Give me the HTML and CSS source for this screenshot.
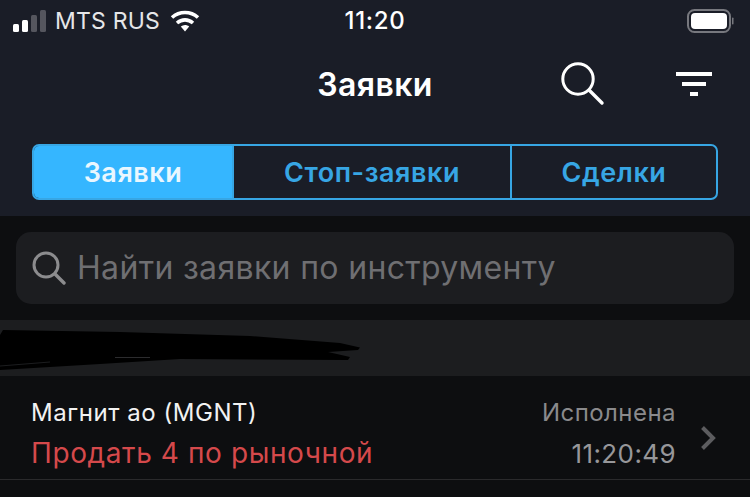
FILE: index.html
```html
<!DOCTYPE html>
<html lang="ru">
<head>
<meta charset="utf-8">
<title>Заявки</title>
<link rel="stylesheet" href="styles.css">
</head>
<body>
<div class="app">
  <header class="top">
    <div class="status">
      <div class="status-left">
        <svg class="signal" width="34" height="22" viewBox="0 0 34 22"><rect x="0" y="14" width="6" height="8" rx="1.5" fill="#fff"/><rect x="9" y="10" width="6" height="12" rx="1.5" fill="#fff"/><rect x="18" y="5" width="6" height="17" rx="1.5" fill="#55565e"/><rect x="27" y="0" width="6" height="22" rx="1.5" fill="#55565e"/></svg>
        <span class="carrier">MTS RUS</span>
        <svg class="wifi" width="30" height="22" viewBox="0 0 30 22"><path d="M2 7.500C9.500.8 20.500.8 28 7.500" fill="none" stroke="#fff" stroke-width="3.600"/><path d="M7 13c4.800-4.200 11.200-4.200 16 0" fill="none" stroke="#fff" stroke-width="3.600"/><path d="M10.800 16.500c2.600-2 5.800-2 8.400 0L15 21.500z" fill="#fff"/></svg>
      </div>
      <div class="clock">11:20</div>
      <div class="status-right">
        <svg width="48" height="24" viewBox="0 0 48 24"><rect x="1" y="1" width="42" height="22" rx="6.500" fill="none" stroke="#77787e" stroke-width="2"/><rect x="4" y="4" width="36" height="16" rx="4" fill="#fff"/><rect x="45" y="8.500" width="1.500" height="7" rx=".7" fill="#77787e"/></svg>
      </div>
    </div>
    <nav class="nav">
      <h1 class="title">Заявки</h1>
      <div class="nav-icons">
        <svg class="ic-search" width="44" height="44" viewBox="0 0 44 44"><circle cx="17" cy="17" r="15.200" fill="none" stroke="#fff" stroke-width="3"/><path d="M28.500 28.500L41 41" fill="none" stroke="#fff" stroke-width="3.400" stroke-linecap="round"/></svg>
        <svg class="ic-filter" width="36" height="24" viewBox="0 0 36 24"><rect x="0" y="0" width="36" height="4" fill="#fff"/><rect x="6" y="10" width="24" height="4" fill="#fff"/><rect x="14" y="20" width="8" height="4" fill="#fff"/></svg>
      </div>
    </nav>
    <div class="seg-wrap">
      <div class="seg">
        <div class="seg-item seg-active">Заявки</div>
        <div class="seg-item seg-stop">Стоп-заявки</div>
        <div class="seg-item seg-deals">Сделки</div>
      </div>
    </div>
  </header>
  <main class="body">
    <div class="search-wrap">
      <div class="search">
        <svg width="34" height="34" viewBox="0 0 34 34"><circle cx="14" cy="14" r="12" fill="none" stroke="#8c8c8e" stroke-width="3"/><path d="M23 23L32 32" stroke="#8c8c8e" stroke-width="3.400" stroke-linecap="round"/></svg>
        <span class="search-text">Найти заявки по инструменту</span>
      </div>
    </div>
    <div class="band">
      <svg class="scribble" width="362" height="56" viewBox="0 0 362 56"><path d="M3 10L120 12L250 16L340 23L360 27.500L358 30L328 32L350 37L348 40L180 39L100 44L0 50L0 15z" fill="#000"/><path d="M115 37.500H150" stroke="#2c2c2e" stroke-width="1"/><path d="M0 46L50 42" stroke="#1c1d1f" stroke-width="1"/></svg>
    </div>
    <div class="row">
      <div class="row-main">
        <div class="row-name">Магнит ао (MGNT)</div>
        <div class="row-sell">Продать 4 по рыночной</div>
      </div>
      <div class="row-side">
        <div class="row-state">Исполнена</div>
        <div class="row-time">11:20:49</div>
      </div>
      <svg class="chev" width="16" height="26" viewBox="0 0 16 26"><path d="M2.500 2.500L13 13L2.500 23.500" fill="none" stroke="#5c5c5f" stroke-width="4"/></svg>
    </div>
  </main>
</div>
</body>
</html>
```
FILE: styles.css
```css
* { box-sizing: border-box; margin: 0; padding: 0; }
html, body { width: 750px; height: 497px; overflow: hidden; background: #0d0e10; }
body { font-family: Inter, "Noto Sans", sans-serif; color: #fff; }
.app { width: 750px; height: 497px; display: flex; flex-direction: column; }
.top { background: #1a1d27; height: 216px; flex: none; }
.status { height: 40px; position: relative; display: flex; align-items: center; justify-content: space-between; padding: 1px 15px 0 13px; }
.status-left { display: flex; align-items: center; }
.signal { margin-right: 8px; }
.carrier { font-size: 23px; color: #e6e6e8; letter-spacing: .2px; margin-right: 10px; }
.clock { position: absolute; left: 0; right: 0; text-align: center; font-size: 24px; font-weight: 500; letter-spacing: .7px; }
.status-right { display: flex; }
.nav { height: 89px; position: relative; display: flex; align-items: center; justify-content: center; }
.title { font-size: 32px; font-weight: 600; line-height: 1; letter-spacing: .4px; }
.nav-icons { position: absolute; top: 22px; left: 561px; display: flex; align-items: flex-start; }
.ic-search { display: block; }
.ic-filter { display: block; margin: 10px 0 0 71px; }
.seg-wrap { padding: 15px 32px 0; }
.seg { display: flex; width: 686px; height: 56px; border: 2px solid #37a6e4; border-radius: 7px; overflow: hidden; }
.seg-item { display: flex; align-items: center; justify-content: center; font-size: 27px; font-weight: 600; color: #37a6e4; height: 100%; letter-spacing: .55px; }
.seg-active { width: 198px; background: #35b6ff; color: #e9f7ff; }
.seg-stop { width: 278px; border-left: 2px solid #37a6e4; }
.seg-deals { flex: 1; border-left: 2px solid #37a6e4; }
.body { flex: 1; display: flex; flex-direction: column; }
.search-wrap { padding: 16px 16px; }
.search { height: 72px; background: #1c1d20; border-radius: 15px; display: flex; align-items: center; padding: 0 16px; gap: 11px; }
.search-text { font-size: 32px; color: #6f6f72; line-height: 1; letter-spacing: .33px; }
.band { height: 56px; background: #1c1d1f; overflow: hidden; }
.scribble { display: block; }
.row { height: 104px; border-bottom: 1px solid #2a2a2c; display: flex; align-items: flex-start; padding: 23px 0 0 31px; }
.row-main { flex: 1; }
.row-name { font-size: 24px; line-height: 28px; color: #f2f2f2; letter-spacing: .55px; }
.row-sell { font-size: 28px; line-height: 32px; color: #d5494b; margin-top: 10px; letter-spacing: .6px; }
.row-side { text-align: right; margin-right: -1px; }
.row-state { font-size: 24px; line-height: 28px; color: #8a8a8c; letter-spacing: .45px; }
.row-time { font-size: 26px; line-height: 32px; color: #97979a; margin-top: 11px; letter-spacing: .4px; }
.chev { margin: 26px 34px 0 25px; }
```
